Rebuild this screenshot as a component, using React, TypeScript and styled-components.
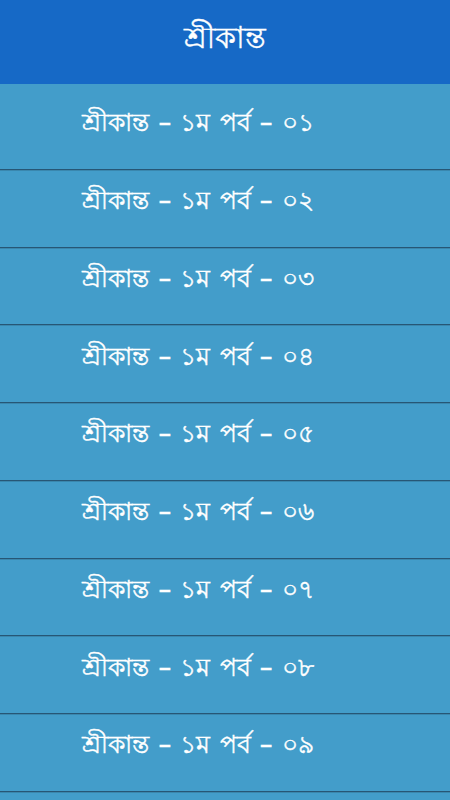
import styled, { createGlobalStyle } from "styled-components";

const GlobalStyle = createGlobalStyle`
  html, body {
    margin: 0;
    padding: 0;
    background: #439dca;
  }
  body {
    font-family: "Noto Sans", "DejaVu Sans", sans-serif;
  }
`;

const Screen = styled.div`
  width: 450px;
  height: 800px;
  overflow: hidden;
  display: flex;
  flex-direction: column;
  background: #439dca;
`;

const Header = styled.header`
  height: 84px;
  box-sizing: border-box;
  padding-bottom: 6px;
  flex-shrink: 0;
  display: flex;
  align-items: center;
  justify-content: center;
  background: #1669c6;
  color: #ffffff;
  font-size: 30px;
  -webkit-text-stroke: 0.4px #ffffff;
`;

const ChapterList = styled.ul`
  list-style: none;
  margin: 0;
  padding: 8px 0 0;
`;

const ChapterRow = styled.li`
  height: 76.75px;
  box-sizing: content-box;
  display: flex;
  align-items: center;
  justify-content: center;
  padding-right: 54px;
  border-bottom: 1px solid #275675;
  box-shadow: 0 1px 0 #3a87ae;
  color: #ffffff;
  font-size: 24.5px;
  word-spacing: 3px;
  -webkit-text-stroke: 0.4px #ffffff;
`;

const RowLabel = styled.span`
  margin-top: -12px;
`;

const digits = ["০১", "০২", "০৩", "০৪", "০৫", "০৬", "০৭", "০৮", "০৯"];

export default function App() {
  return (
    <Screen>
      <GlobalStyle />
      <Header>শ্রীকান্ত</Header>
      <ChapterList>
        {digits.map((d) => (
          <ChapterRow key={d}>
            <RowLabel>শ্রীকান্ত – ১ম পর্ব – {d}</RowLabel>
          </ChapterRow>
        ))}
      </ChapterList>
    </Screen>
  );
}
